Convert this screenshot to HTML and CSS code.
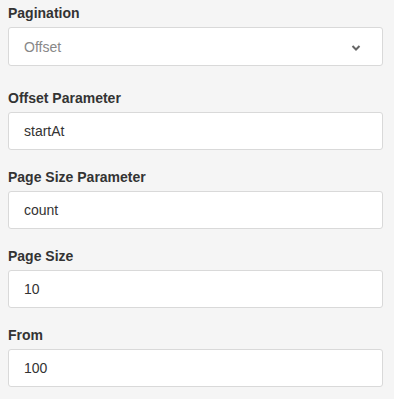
FILE: index.html
```html
<!DOCTYPE html>
<html>
<head>
<meta charset="utf-8">
<link rel="stylesheet" href="styles.css">
</head>
<body>
<div class="form">
  <div class="group group-select">
    <div class="label">Pagination</div>
    <div class="select">
      <span class="select-value">Offset</span>
      <svg class="chevron" width="10" height="8" viewBox="0 0 10 8"><path d="M1.5 2 L5 5.5 L8.5 2" fill="none" stroke="#666" stroke-width="2"/></svg>
    </div>
  </div>
  <div class="group">
    <div class="label">Offset Parameter</div>
    <div class="input">startAt</div>
  </div>
  <div class="group">
    <div class="label">Page Size Parameter</div>
    <div class="input">count</div>
  </div>
  <div class="group">
    <div class="label">Page Size</div>
    <div class="input">10</div>
  </div>
  <div class="group">
    <div class="label">From</div>
    <div class="input">100</div>
  </div>
</div>
</body>
</html>
```
FILE: styles.css
```css
html, body {
  margin: 0;
  padding: 0;
  background: #f5f5f5;
}
body {
  font-family: "Liberation Sans", Arial, sans-serif;
  font-size: 14px;
  color: #333;
}
.form {
  padding: 5px 11px 0 8px;
  display: flex;
  flex-direction: column;
  gap: 19px;
}
.group-select {
  margin-bottom: 5px;
}
.label {
  font-weight: bold;
  font-size: 14px;
  line-height: 16px;
  margin-bottom: 6px;
  color: #333;
}
.select, .input {
  box-sizing: border-box;
  background: #fff;
  border: 1px solid #d9d9d9;
  border-radius: 3px;
  padding: 0 15px;
  display: flex;
  align-items: center;
}
.select {
  height: 39px;
  justify-content: space-between;
  color: #888;
}
.input {
  height: 38px;
  color: #333;
}
.chevron {
  margin-right: 6px;
  margin-top: 2px;
}
```
